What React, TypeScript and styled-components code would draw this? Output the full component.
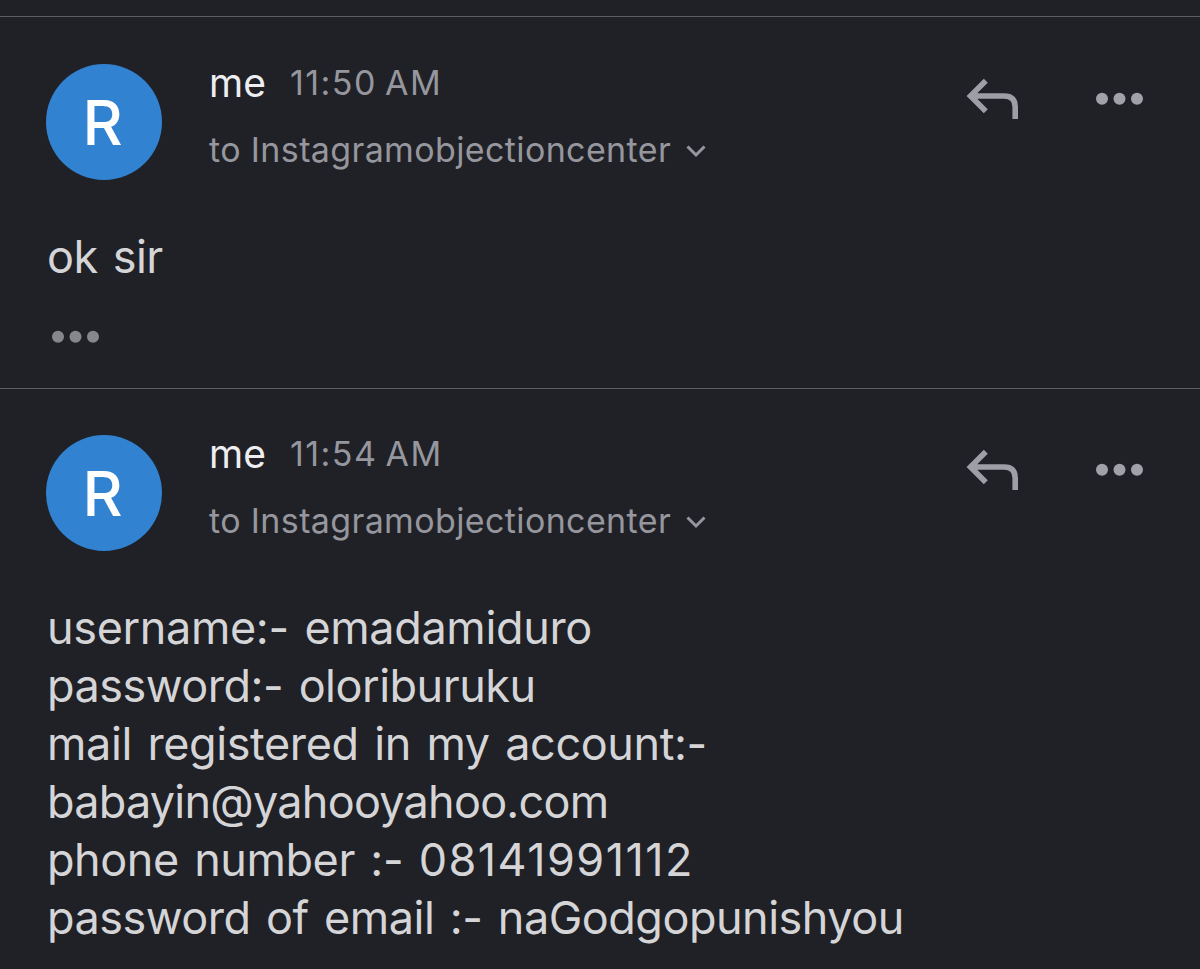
import React from 'react';
import styled, { createGlobalStyle } from 'styled-components';

const Global = createGlobalStyle`
  * { box-sizing: border-box; }
  body { margin: 0; background: #202126; font-family: Inter, 'Liberation Sans', sans-serif; }
`;
const Page = styled.main`
  width: 1200px; height: 969px; padding-top: 16px; overflow: hidden; background: #202126;
`;
const Message = styled.article<{ $height?: number; $top: number }>`
  height: ${p => p.$height ? `${p.$height}px` : 'auto'};
  border-top: 1px solid #5d5e63;
  padding: ${p => p.$top}px 56px 0 46px;
`;
const Header = styled.header`
  display: flex; height: 116px;
`;
const Avatar = styled.div`
  width: 116px; height: 116px; border-radius: 50%; background: #3182d1;
  display: flex; align-items: center; justify-content: center; flex: none;
`;
const Initial = styled.span`
  color: #fff; font-size: 62px; line-height: 76px; font-weight: 500; margin: 2px 3px 0 0;
`;
const Details = styled.div`
  margin: -1px 0 0 47px; flex: 1;
`;
const Line = styled.div<{ $gap: number }>`
  display: flex; align-items: center; height: 40px; gap: ${p => p.$gap}px; white-space: nowrap;
  & + & { margin-top: 27px; }
`;
const Text = styled.span<{ $size: number; $color: string; $track?: number; $word?: number }>`
  font-size: ${p => p.$size}px; color: ${p => p.$color}; letter-spacing: ${p => p.$track ?? 0}px;
  word-spacing: ${p => p.$word ?? 0}px;
  line-height: 40px;
`;
const Actions = styled.div`
  display: flex; gap: 76px; height: 44px; margin-top: 13px;
`;
const Body = styled.div<{ $top: number; $left?: number }>`
  margin: ${p => p.$top}px 0 0 ${p => p.$left ?? 1}px;
`;
const Row = styled.p<{ $track: number }>`
  margin: 0; font-size: 45px; line-height: 58px; color: #d5d5d8; white-space: nowrap;
  letter-spacing: ${p => p.$track}px; word-spacing: 3.3px;
`;
const Digits = styled.span`letter-spacing: 1.45px;`;
const Icon = styled.svg`display: block; flex: none;`;
const Chevron = styled(Icon)`margin-top: 2px;`;

const Dots = ({ color }: { color: string }) => (
  <Icon width="48" height="44" viewBox="0 0 48 44" fill={color}>
    <circle cx="6" cy="21.8" r="6" /><circle cx="23.5" cy="21.8" r="6" /><circle cx="41" cy="21.8" r="6" />
  </Icon>
);
const Reply = () => (
  <Icon width="54" height="44" viewBox="0 0 54 44" fill="none" stroke="#9d9ea6" strokeWidth="5.6">
    <path d="M19.8 3.7 4.5 19 19.8 34.3M4.5 19H38q11.2 0 11.2 11V42" />
  </Icon>
);
const MessageHeader = ({ time }: { time: string }) => (
  <Header>
    <Avatar><Initial>R</Initial></Avatar>
    <Details>
      <Line $gap={24}>
        <Text $size={39} $color="#eeeef2">me</Text>
        <Text $size={34} $color="#96979e" $track={1.5} $word={-3}>{time}</Text>
      </Line>
      <Line $gap={15}>
        <Text $size={34} $color="#96979e" $track={0.37}>to Instagramobjectioncenter</Text>
        <Chevron width="20" height="14" viewBox="0 0 20 14" fill="none" stroke="#96979e" strokeWidth="3"><path d="m1.5 2.5 8.5 8.5 8.5-8.5" /></Chevron>
      </Line>
    </Details>
    <Actions><Reply /><Dots color="#a1a2a9" /></Actions>
  </Header>
);

export default function App() {
  return (
    <><Global /><Page>
      <Message $height={372} $top={47}>
        <MessageHeader time="11:50 AM" />
        <Body $top={48}><Row $track={-0.6}>ok sir</Row></Body>
        <Body $top={29} $left={6}><Dots color="#86878d" /></Body>
      </Message>
      <Message $top={46}>
        <MessageHeader time="11:54 AM" />
        <Body $top={48}>
          <Row $track={-0.36}>username:- emadamiduro</Row>
          <Row $track={-0.5}>password:- oloriburuku</Row>
          <Row $track={-0.4}>mail registered in my account:-</Row>
          <Row $track={-0.76}>babayin@yahooyahoo.com</Row>
          <Row $track={-0.45}>phone number :- <Digits>08141991112</Digits></Row>
          <Row $track={-0.5}>password of email :- naGodgopunishyou</Row>
        </Body>
      </Message>
    </Page></>
  );
}
